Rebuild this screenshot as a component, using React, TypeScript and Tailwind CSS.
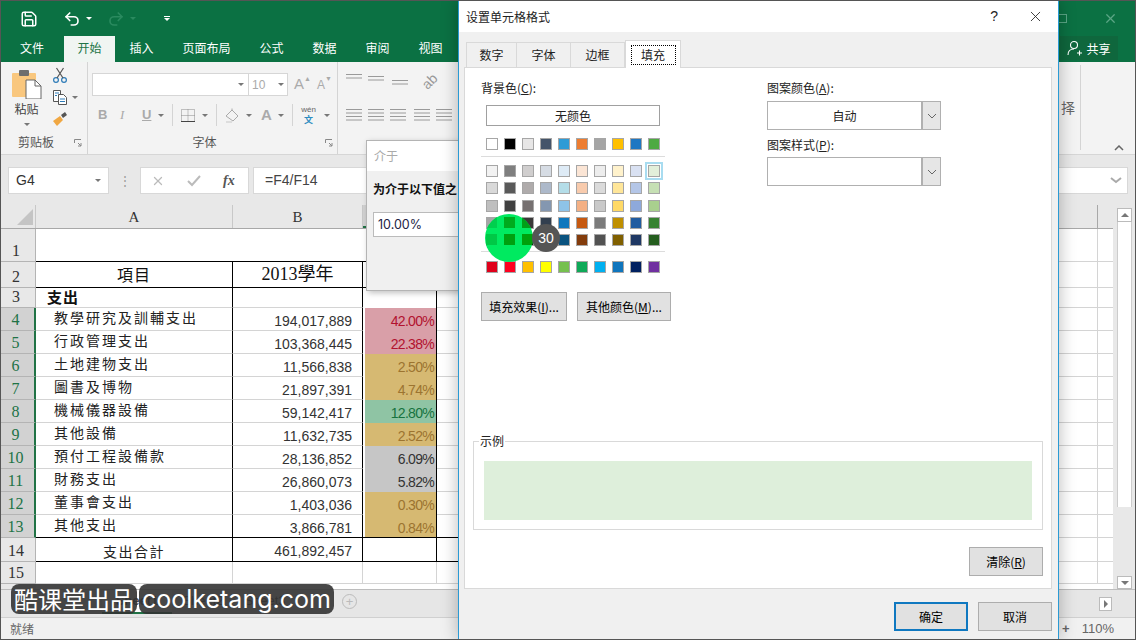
import { Redo2, Save, Undo2, X } from 'lucide-react';

const cjk = "font-['Noto_Sans_CJK_SC','Noto_Sans',sans-serif]";

const themeColors = ['bg-white', 'bg-black', 'bg-[#e7e6e6]', 'bg-[#44546a]', 'bg-[#2e9bd6]', 'bg-[#ed7d31]', 'bg-[#a5a5a5]', 'bg-[#ffc000]', 'bg-[#1f77c2]', 'bg-[#4eaa42]'];
const tintRows = [
  ['bg-[#f2f2f2]', 'bg-[#7f7f7f]', 'bg-[#d0cece]', 'bg-[#d6dce4]', 'bg-[#deebf6]', 'bg-[#fbe5d5]', 'bg-[#ededed]', 'bg-[#fff2cc]', 'bg-[#d9e1f2]', 'bg-[#e2efda]'],
  ['bg-[#d9d9d9]', 'bg-[#595959]', 'bg-[#afabab]', 'bg-[#adb9ca]', 'bg-[#b4dde8]', 'bg-[#f8cbad]', 'bg-[#dbdbdb]', 'bg-[#ffe699]', 'bg-[#b4c6e7]', 'bg-[#c6e0b4]'],
  ['bg-[#bfbfbf]', 'bg-[#404040]', 'bg-[#767171]', 'bg-[#8497b0]', 'bg-[#8ec3e8]', 'bg-[#f4b084]', 'bg-[#c9c9c9]', 'bg-[#ffd966]', 'bg-[#8ea9db]', 'bg-[#a9d08e]'],
  ['bg-[#a6a6a6]', 'bg-[#262626]', 'bg-[#3a3838]', 'bg-[#323f4f]', 'bg-[#0e77bd]', 'bg-[#c65911]', 'bg-[#7b7b7b]', 'bg-[#bf8f00]', 'bg-[#215ca0]', 'bg-[#378232]'],
  ['bg-[#808080]', 'bg-[#0d0d0d]', 'bg-[#171616]', 'bg-[#222b35]', 'bg-[#0a5380]', 'bg-[#833c0c]', 'bg-[#525252]', 'bg-[#806000]', 'bg-[#1f3864]', 'bg-[#255e1f]'],
];
const standardColors = ['bg-[#e0001b]', 'bg-[#ff0020]', 'bg-[#ffc000]', 'bg-[#ffff00]', 'bg-[#76c04f]', 'bg-[#0fa958]', 'bg-[#00b0f0]', 'bg-[#0f75bd]', 'bg-[#002060]', 'bg-[#7030a0]'];

const red = 'bg-[#d99fa8] text-[#b2122f]';
const tan = 'bg-[#d6b972] text-[#9c7430]';
const green = 'bg-[#8fc4a4] text-[#16733f]';
const grey = 'bg-[#c6c6c6] text-[#333]';

const dataRows = [
  { n: 4, a: '教學研究及訓輔支出', b: '194,017,889', c: '42.00%', fill: red },
  { n: 5, a: '行政管理支出', b: '103,368,445', c: '22.38%', fill: red },
  { n: 6, a: '土地建物支出', b: '11,566,838', c: '2.50%', fill: tan },
  { n: 7, a: '圖書及博物', b: '21,897,391', c: '4.74%', fill: tan },
  { n: 8, a: '機械儀器設備', b: '59,142,417', c: '12.80%', fill: green },
  { n: 9, a: '其他設備', b: '11,632,735', c: '2.52%', fill: tan },
  { n: 10, a: '預付工程設備款', b: '28,136,852', c: '6.09%', fill: grey },
  { n: 11, a: '財務支出', b: '26,860,073', c: '5.82%', fill: grey },
  { n: 12, a: '董事會支出', b: '1,403,036', c: '0.30%', fill: tan },
  { n: 13, a: '其他支出', b: '3,866,781', c: '0.84%', fill: tan },
];

function Caret({ className = '' }: { className?: string }) {
  return <span className={`block w-0 h-0 border-x-[3px] border-x-transparent border-t-[3px] border-t-[#777] ${className}`} />;
}

function Lines({ rows, className = '' }: { rows: number[]; className?: string }) {
  // small text-align style glyph, each number is the left inset of a line
  return (
    <svg width="16" height="14" viewBox="0 0 16 14" className={className} stroke="#9a9a9a" fill="none">
      {rows.map((inset, i) => (
        <path key={i} d={`M${inset} ${1.5 + i * 3.5}H${16 - (inset > 8 ? 0 : inset)}`} />
      ))}
    </svg>
  );
}

function Launcher({ className = '' }: { className?: string }) {
  return (
    <svg width="8" height="8" viewBox="0 0 8 8" className={className} fill="none" stroke="#888">
      <path d="M.5 4V.5H7M4 4l3 3M7 4v3H4" />
    </svg>
  );
}

function RibbonClipboard() {
  return (
    <div className="w-[87px] h-full border-r border-[#d4d4d4] flex flex-col shrink-0">
      <div className="flex flex-1">
        <div className="w-[51px] flex flex-col items-center pt-[6px]">
          <svg width="30" height="31" viewBox="0 0 30 31">
            <rect x="0" y="5" width="24" height="24" rx="1" fill="#f9c77e" />
            <rect x="7" y="2" width="10" height="6" rx="1" fill="#6d6d6d" />
            <path d="M14 12h9l6 6v13H14z" fill="#fff" stroke="#666" />
            <path d="M23 12v6h6" fill="none" stroke="#666" />
          </svg>
          <span className={`${cjk} text-[12px] leading-[18px] text-[#444] mt-[1px]`}>粘贴</span>
          <Caret className="mt-[5px]" />
        </div>
        <div className="flex flex-col items-start gap-[6px] pt-[5px]">
          <svg width="16" height="16" viewBox="0 0 16 16" fill="none" stroke="#2e7cb8" strokeWidth="1.2">
            <circle cx="4" cy="13" r="2.4" />
            <circle cx="12" cy="13" r="2.4" />
            <path d="M5 11 11.5 1M11 11 4.500 1" stroke="#555" />
          </svg>
          <div className="flex items-center gap-[4px]">
            <svg width="16" height="16" viewBox="0 0 16 16" fill="#fff" stroke="#555">
              <path d="M1.500 1.500h7v11h-7z" />
              <path d="M6.500 5.500h5l3 3v7h-8z" />
              <path d="M3 4h4M3 6.500h2M8 10h5M8 12.500h5" stroke="#2e7cb8" />
            </svg>
            <Caret />
          </div>
          <svg width="16" height="16" viewBox="0 0 16 16">
            <path d="M1 10 8 5l3 4-6 6z" fill="#f0a742" />
            <path d="M9 4l4-3 2 3-4 3z" fill="#555" />
          </svg>
        </div>
      </div>
      <div className="relative h-[20px] flex justify-center items-start">
        <span className={`${cjk} text-[12px] leading-[16px] text-[#555] pr-[16px]`}>剪贴板</span>
        <Launcher className="absolute right-[5px] top-[5px]" />
      </div>
    </div>
  );
}

function RibbonFont() {
  return (
    <div className="w-[250px] h-full border-r border-[#d4d4d4] shrink-0 flex flex-col">
      <div className="flex items-center pt-[11px] pl-[4px]">
        <div className="w-[157px] h-[23px] bg-white border border-[#d6d6d6] flex items-center justify-end pr-[4px]">
          <Caret />
        </div>
        <div className="w-[39px] h-[23px] bg-white border border-[#d6d6d6] border-l-0 flex items-center justify-between px-[3px]">
          <span className="font-['Liberation_Sans',sans-serif] text-[12px] text-[#aaa]">10</span>
          <Caret />
        </div>
        <span className="font-['Liberation_Sans',sans-serif] text-[15px] text-[#aaa] ml-[6px]">A</span>
        <span className="text-[7px] text-[#aaa] -mt-[10px]">▲</span>
        <span className="font-['Liberation_Sans',sans-serif] text-[12px] text-[#aaa] ml-[6px]">A</span>
        <span className="text-[7px] text-[#aaa] -mt-[10px]">▼</span>
      </div>
      <div className="flex items-center h-[22px] mt-[8px] pl-[10px] font-['Liberation_Sans',sans-serif] text-[#aaa] text-[13px]">
        <span className="w-[22px] font-bold">B</span>
        <span className="w-[22px] italic font-['Liberation_Serif',serif]">I</span>
        <span className="w-[16px] underline font-bold">U</span>
        <Caret />
        <span className="w-px h-[22px] bg-[#d4d4d4] ml-[8px] mr-[8px]" />
        <svg width="14" height="13" viewBox="0 0 14 13" fill="none" stroke="#8a8a8a" strokeDasharray="1 1">
          <path d="M.5.5h13v12H.5zM.5 6.500h13M7 .5v12" />
          <path d="M0 12.500h14" stroke="#444" strokeDasharray="none" />
        </svg>
        <Caret className="ml-[7px]" />
        <span className="w-px h-[22px] bg-[#d4d4d4] ml-[8px] mr-[8px]" />
        <svg width="16" height="15" viewBox="0 0 16 15" fill="none" stroke="#aaa">
          <path d="M1 8 7 2l6 6-5 5z" />
          <path d="M7 2V.5" />
          <path d="M1 14h6" stroke="#ddd" strokeWidth="2" />
        </svg>
        <Caret className="ml-[5px]" />
        <span className="text-[15px] font-bold ml-[9px] w-[14px]">A</span>
        <Caret className="ml-[3px]" />
        <span className="w-px h-[22px] bg-[#d4d4d4] ml-[8px] mr-[7px]" />
        <div className="flex flex-col items-center leading-[10px] w-[17px]">
          <span className="text-[8px] text-[#666]">wén</span>
          <span className={`${cjk} text-[9px] text-[#2e8cc0] font-bold`}>文</span>
        </div>
        <Caret className="ml-[7px]" />
      </div>
      <div className="relative mt-auto h-[20px] flex justify-center">
        <span className={`${cjk} text-[12px] leading-[16px] text-[#555] -ml-[16px]`}>字体</span>
        <Launcher className="absolute right-[4px] top-[5px]" />
      </div>
    </div>
  );
}

function RibbonAlign() {
  return (
    <div className="flex-1 flex flex-col pl-[8px] pt-[11px]">
      <div className="flex items-start gap-[6px]">
        <Lines rows={[0, 0]} />
        <Lines rows={[0, 0]} className="mt-[2px]" />
        <Lines rows={[0, 0]} className="mt-[6px] ml-[2px]" />
        <span className="ml-[8px] -mt-[2px] text-[14px] text-[#999] -rotate-45 font-['Liberation_Sans',sans-serif]">ab</span>
      </div>
      <div className="flex items-center gap-[6px] mt-[15px]">
        <Lines rows={[0, 0, 0, 0]} />
        <Lines rows={[0, 0, 0, 0]} />
        <Lines rows={[0, 0, 0, 0]} />
        <Lines rows={[0, 0, 0, 0]} className="ml-[2px]" />
        <Lines rows={[0, 0, 0, 0]} />
      </div>
    </div>
  );
}

function ExcelTop() {
  return (
    <>
      <div className="h-[35px] bg-[#0b7143] flex items-center pl-[19px] shrink-0">
        <Save size={18} color="#fff" strokeWidth={2} />
        <Undo2 size={18} color="#fff" strokeWidth={2.2} className="ml-[25px]" />
        <span className="ml-[5px] w-0 h-0 border-x-[3px] border-x-transparent border-t-[3px] border-t-white" />
        <Redo2 size={18} color="#2a8a5f" strokeWidth={2.2} className="ml-[15px]" />
        <span className="ml-[5px] w-0 h-0 border-x-[3px] border-x-transparent border-t-[3px] border-t-[#2a8a5f]" />
        <div className="ml-[28px] flex flex-col items-center gap-[1px]">
          <span className="w-[6px] h-px bg-white" />
          <span className="w-0 h-0 border-x-[3px] border-x-transparent border-t-[3px] border-t-white" />
        </div>
        <div className="ml-auto flex items-center pr-[17px]">
          <span className="w-[9px] h-[9px] border border-[#5aa585] mr-[36px]" />
          <X size={15} color="#5aa585" />
        </div>
      </div>
      <div className={`${cjk} h-[26px] bg-[#0b7143] flex items-stretch text-[12px] leading-[23px] text-white shrink-0`}>
        <span className="pl-[19px] pr-[20px]">文件</span>
        <span className="px-[13.5px] bg-[#f0f5f2] text-[#217346]">开始</span>
        <span className="px-[14.500px]">插入</span>
        <span className="px-[14.500px]">页面布局</span>
        <span className="px-[14.500px]">公式</span>
        <span className="px-[14.500px]">数据</span>
        <span className="px-[14.500px]">审阅</span>
        <span className="px-[14.500px]">视图</span>
        <div className="ml-auto mr-[17px] w-[58px] h-[24px] bg-[#0f673d] flex items-center justify-center gap-[3px]">
          <svg width="16" height="16" viewBox="0 0 16 16" fill="none" stroke="#fff" strokeWidth="1.1">
            <circle cx="7" cy="5" r="3.500" />
            <path d="M1 15c0-4 2.500-6 6-6M10 13h5M12.500 10.500v5" />
          </svg>
          <span>共享</span>
        </div>
      </div>
      <div className="h-[93px] bg-[#f3f3f3] border-b border-[#d6d6d6] flex relative shrink-0">
        <RibbonClipboard />
        <RibbonFont />
        <RibbonAlign />
        <div className="w-[22px] h-[85px] mt-[3px] mr-[54px] border-r border-[#d4d4d4] flex items-center">
          <span className={`${cjk} text-[14px] text-[#666] ml-[2px]`}>择</span>
        </div>
        <svg width="10" height="6" viewBox="0 0 10 6" className="absolute right-[11px] bottom-[3px]" fill="none" stroke="#666" strokeWidth="1.500">
          <path d="M1 5l4-4 4 4" />
        </svg>
      </div>
      <div className="h-[50px] bg-[#e8e8e8] flex items-start pt-[12px] pl-[7px] pr-[7px] shrink-0">
        <div className="w-[101px] h-[27px] bg-white border border-[#d8d8d8] flex items-center justify-between pl-[7px] pr-[7px] font-['Liberation_Sans',sans-serif] text-[14px] text-[#333]">
          G4
          <Caret />
        </div>
        <span className="w-[31px] text-center text-[#999] text-[12px] leading-[27px]">⋮</span>
        <div className="w-[109px] h-[27px] bg-white border border-[#d8d8d8] flex items-center pl-[10px] gap-[22px] text-[#bbb]">
          <X size={14} color="#bbb" strokeWidth={2.2} />
          <svg width="14" height="12" viewBox="0 0 14 12" fill="none" stroke="#bbb" strokeWidth="2">
            <path d="M1 6l4 4 8-9" />
          </svg>
          <span className="font-['Liberation_Serif',serif] italic text-[14px] font-bold text-[#555]">fx</span>
        </div>
        <div className="flex-1 ml-[4px] h-[27px] bg-white border border-[#d8d8d8] flex items-center pl-[11px] pr-[5px] font-['Liberation_Sans',sans-serif] text-[14px] text-[#444]">
          =F4/F14
          <svg width="12" height="7" viewBox="0 0 12 7" fill="none" stroke="#aaa" strokeWidth="2" className="ml-auto">
            <path d="M1 1l5 4 5-4" />
          </svg>
        </div>
      </div>
    </>
  );
}

function RowNum({ n, active = false }: { n: number; active?: boolean }) {
  return (
    <div
      className={`w-[35px] shrink-0 flex items-end justify-center font-['Liberation_Serif',serif] text-[16px] leading-[20px] pr-[4px] border-b border-[#b4b4b4] ${
        active ? 'bg-[#d2d2d2] text-[#217346] border-r-2 border-r-[#217346]' : 'bg-[#e8e8e8] text-[#333] border-r border-r-[#b4b4b4]'
      }`}
    >
      {n}
    </div>
  );
}

// column D runs under the dialogs; the table's black rules stop beneath them
function RestCells({ black = false }: { black?: boolean }) {
  return (
    <>
      <div className={`w-[120px] shrink-0 border-b ${black ? 'border-black' : 'border-[#d4d4d4]'}`} />
      <div className="flex-1 border-b border-r border-[#d4d4d4]" />
      <div className="w-[15px] shrink-0 border-b border-[#d4d4d4]" />
    </>
  );
}

function Sheet() {
  const number = "font-['Liberation_Sans',sans-serif] text-[14px] text-[#333]";
  const cellA = `${cjk} w-[197px] shrink-0 text-[14px] text-[#222] tracking-[2px]`;
  return (
    <div className="flex h-[384px] bg-[#e8e8e8] shrink-0">
      <div className="w-[1112px] shrink-0 flex flex-col bg-white">
        <div className="h-[24px] flex bg-[#e8e8e8] border-b border-[#a8a8a8] font-['Liberation_Serif',serif] text-[15px] text-[#333] shrink-0">
          <div className="w-[35px] flex items-end justify-end pr-[2px] pb-[3px] border-r border-[#c8c8c8]">
            <span className="w-0 h-0 border-l-[16px] border-l-transparent border-b-[16px] border-b-[#c4c4c4]" />
          </div>
          <div className="w-[197px] text-center leading-[24px] border-r border-[#c8c8c8]">A</div>
          <div className="w-[130px] text-center leading-[24px] border-r border-[#c8c8c8]">B</div>
          <div className="w-[74px] bg-[#d2d2d2] border-b-2 border-[#217346]" />
          <div className="flex-1 border-r border-[#a8a8a8]" />
          <div className="w-[15px]" />
        </div>

        <div className="h-[33px] flex shrink-0">
          <RowNum n={1} />
          <div className="w-[401px] shrink-0 border-b border-black" />
          <RestCells black />
        </div>

        <div className="h-[26px] flex shrink-0">
          <RowNum n={2} />
          <div className={`${cjk} w-[197px] text-center text-[16px] tracking-[1px] leading-[24px] text-[#111] border-b border-r border-black`}>項目</div>
          <div className="w-[130px] text-center font-['Liberation_Serif','Noto_Sans_CJK_TC',serif] text-[18px] leading-[24px] text-[#111] border-b border-r border-black">2013學年</div>
          <div className="w-[74px] border-b border-r border-black" />
          <RestCells black />
        </div>

        <div className="h-[20px] flex shrink-0">
          <RowNum n={3} />
          <div className={`${cjk} w-[197px] pl-[11px] font-bold text-[15px] leading-[18px] tracking-[1px] text-[#111] border-b border-r border-[#d4d4d4] border-r-black`}>支出</div>
          <div className="w-[130px] border-b border-r border-[#d4d4d4] border-r-black" />
          <div className="w-[74px] border-r border-black" />
          <RestCells />
        </div>

        {dataRows.map((row) => (
          <div key={row.n} className="h-[23px] flex shrink-0">
            <RowNum n={row.n} active />
            <div className={`${cellA} pl-[18px] leading-[19px] border-b border-r border-[#d4d4d4] border-r-black ${row.n === 13 ? 'border-b-black' : ''}`}>{row.a}</div>
            <div className={`${number} w-[130px] shrink-0 text-right pr-[10px] leading-[27px] border-b border-r border-[#d4d4d4] border-r-black ${row.n === 13 ? 'border-b-black' : ''}`}>{row.b}</div>
            <div className={`w-[74px] shrink-0 border-r border-black pl-[2px] ${row.n === 13 ? 'border-b border-b-black' : ''}`}>
              <div className={`h-full font-['Liberation_Sans',sans-serif] text-[14px] tracking-[-0.7px] text-right leading-[26px] pr-[2px] ${row.fill}`}>{row.c}</div>
            </div>
            <RestCells black={row.n === 13} />
          </div>
        ))}

        <div className="h-[24px] flex shrink-0">
          <RowNum n={14} />
          <div className={`${cjk} w-[197px] text-center text-[14px] tracking-[1.500px] leading-[26px] text-[#222] border-b border-r border-black`}>支出合計</div>
          <div className={`${number} w-[130px] text-right pr-[10px] leading-[27px] border-b border-r border-black`}>461,892,457</div>
          <div className="w-[74px] border-b border-r border-black" />
          <RestCells black />
        </div>

        <div className="h-[22px] flex shrink-0">
          <RowNum n={15} />
          <div className="w-[197px] border-b border-r border-[#d4d4d4]" />
          <div className="w-[130px] border-b border-r border-[#d4d4d4]" />
          <div className="w-[74px] border-b border-r border-[#d4d4d4]" />
          <RestCells />
        </div>
        <div className="flex-1 flex">
          <div className="w-[35px] bg-[#e8e8e8]" />
        </div>
      </div>

      <div className="w-[15px] ml-[4px] flex flex-col pt-[3px]">
        <div className="h-[14px] bg-white border border-[#bbb] flex items-center justify-center">
          <span className="w-0 h-0 border-x-[4px] border-x-transparent border-b-[4px] border-b-[#777]" />
        </div>
        <div className="h-[285px] bg-white border-x border-[#ccc]" />
        <div className="flex-1" />
        <div className="h-[13px] bg-white border border-[#bbb] flex items-center justify-center">
          <span className="w-0 h-0 border-x-[4px] border-x-transparent border-t-[4px] border-t-[#777]" />
        </div>
      </div>
    </div>
  );
}

function ExcelBottom() {
  return (
    <>
      <div className="h-[28px] bg-[#e6e6e6] border-t border-[#bdbdbd] flex items-start pl-[101px] shrink-0 font-['Liberation_Sans',sans-serif] text-[13px] text-[#444]">
        <span className="w-[70px] h-[24px] bg-white border-b-2 border-[#217346] text-center leading-[22px] font-bold">Sheet1</span>
        <span className="w-[62px] text-center leading-[22px]">Sheet2</span>
        <span className="w-[62px] text-center leading-[22px]">Sheet3</span>
        <span className="ml-[46px] mt-[4px] w-[15px] h-[15px] rounded-full border border-[#bbb] text-center text-[#bbb] leading-[13px]">+</span>
        <div className="ml-auto mr-[23px] mt-[7px] w-[13px] h-[14px] bg-white border border-[#bbb] flex items-center justify-center">
          <span className="w-0 h-0 border-y-[4px] border-y-transparent border-l-[4px] border-l-[#777]" />
        </div>
      </div>
      <div className="h-[22px] bg-[#f1f1f1] border-t border-[#d0d0d0] flex items-center pl-[9px] pr-[21px] shrink-0">
        <span className={`${cjk} text-[12px] text-[#666]`}>就绪</span>
        <span className="ml-auto font-['Liberation_Sans',sans-serif] text-[13px] font-bold text-[#666]">+</span>
        <span className="ml-[12px] font-['Liberation_Sans',sans-serif] text-[13px] text-[#666]">110%</span>
      </div>
    </>
  );
}

function Swatch({ color, selected = false }: { color: string; selected?: boolean }) {
  return (
    <span className={`w-[12px] h-[12px] border border-[#a6a6a6] shrink-0 ${color} ${selected ? 'outline-2 outline-offset-1 outline-[#a8dcf0]' : ''}`} />
  );
}

function SwatchRow({ colors, selectedIndex = -1 }: { colors: string[]; selectedIndex?: number }) {
  return (
    <div className="flex gap-[6px] h-[12px]">
      {colors.map((c, i) => (
        <Swatch key={i} color={c} selected={i === selectedIndex} />
      ))}
    </div>
  );
}

function Combo({ value }: { value: string }) {
  return (
    <div className="w-[174px] h-[29px] bg-white border border-[#b0b0b0] flex items-stretch">
      <span className="flex-1 text-center leading-[27px]">{value}</span>
      <span className="w-[19px] bg-[#e6e6e6] border-x-2 border-[#b0b0b0] border-r-0 flex items-center justify-center">
        <svg width="10" height="6" viewBox="0 0 10 6" fill="none" stroke="#666">
          <path d="M1 1l4 4 4-4" />
        </svg>
      </span>
    </div>
  );
}

function DialogButton({ children, primary = false, className = '' }: { children: React.ReactNode; primary?: boolean; className?: string }) {
  return (
    <button className={`h-[29px] bg-[#e1e1e1] text-black text-[12px] ${primary ? 'border-2 border-[#0f78c0]' : 'border border-[#adadad]'} ${className}`}>
      {children}
    </button>
  );
}

function FormatDialog() {
  return (
    <div className={`${cjk} absolute left-[457px] -top-px w-[601px] h-[640px] bg-[#f0f0f0] border-x border-t border-[#2a9ad4] shadow-[0_0_16px_rgba(0,0,0,0.28)] flex flex-col text-[12px] text-[#222]`}>
      <div className="h-[31px] bg-white flex items-center pl-[7px] shrink-0">
        <span>设置单元格格式</span>
        <span className="ml-auto font-['Liberation_Sans',sans-serif] text-[14px]">?</span>
        <X size={17} strokeWidth={1.2} className="ml-[29px] mr-[14px]" color="#222" />
      </div>

      <div className="h-[35px] flex items-end pl-[7px] shrink-0">
        <span className="w-[51px] h-[25px] bg-[#f0f0f0] border border-b-0 border-[#d9d9d9] text-center leading-[24px]">数字</span>
        <span className="w-[54px] h-[25px] bg-[#f0f0f0] border border-b-0 border-l-0 border-[#d9d9d9] text-center leading-[24px]">字体</span>
        <span className="w-[54px] h-[25px] bg-[#f0f0f0] border border-b-0 border-l-0 border-[#d9d9d9] text-center leading-[24px]">边框</span>
        <span className="relative z-10 w-[56px] h-[28px] -mb-px bg-white border border-b-0 border-[#d9d9d9] flex items-center justify-center">
          <span className="w-[45px] h-[20px] border border-dotted border-black text-center leading-[18px]">填充</span>
        </span>
      </div>

      <div className="ml-[5px] mr-[6px] h-[522px] bg-white border border-[#d9d9d9] flex flex-col shrink-0">
        <div className="flex pl-[16px] pt-[11px]">
          <div className="w-[286px] shrink-0 flex flex-col">
            <span className="leading-[18px]">背景色(<span className="underline">C</span>):</span>
            <div className="relative ml-[5px] mt-[8px]">
              <div className="w-[174px] h-[21px] border border-[#a0a0a0] text-center leading-[19px]">无颜色</div>
              <div className="mt-[12px]">
                <SwatchRow colors={themeColors} />
              </div>
              <div className="w-[184px] -ml-[5px] h-px bg-[#dcdcdc] mt-[6px] mb-[8px]" />
              <div className="flex flex-col gap-[5.300px]">
                <SwatchRow colors={tintRows[0]} selectedIndex={9} />
                {tintRows.slice(1).map((r, i) => (
                  <SwatchRow key={i} colors={r} />
                ))}
              </div>
              <div className="w-[184px] -ml-[5px] h-px bg-[#dcdcdc] mt-[5px] mb-[9px]" />
              <SwatchRow colors={standardColors} />

              {/* click highlight from the screen recording */}
              <svg width="48" height="48" viewBox="0 0 48 48" className="absolute left-[-1px] top-[109px]">
                <defs>
                  <clipPath id="spot">
                    <circle cx="24" cy="24" r="24" />
                  </clipPath>
                </defs>
                <circle cx="24" cy="24" r="24" fill="#00ea60" />
                <g clipPath="url(#spot)">
                  <rect x="1" y="3" width="11" height="11" fill="#00cf4e" />
                  <rect x="19" y="3" width="11" height="11" fill="#00ab1e" />
                  <rect x="37" y="3" width="11" height="11" fill="#00a018" />
                  <rect x="1" y="20" width="11" height="11" fill="#00c846" />
                  <rect x="19" y="20" width="11" height="11" fill="#00a010" />
                  <rect x="37" y="20" width="11" height="11" fill="#00a00c" />
                </g>
              </svg>
              <span className="absolute left-[46px] top-[119px] w-[28px] h-[28px] rounded-full bg-[#555] text-white text-center leading-[28px] font-['Liberation_Sans',sans-serif] text-[14px]">30</span>
            </div>
            <div className="flex gap-[10px] mt-[19px]">
              <DialogButton className="w-[86px]">填充效果(<span className="underline">I</span>)...</DialogButton>
              <DialogButton className="w-[94px]">其他颜色(<span className="underline">M</span>)...</DialogButton>
            </div>
          </div>
          <div className="flex flex-col">
            <span className="leading-[18px]">图案颜色(<span className="underline">A</span>):</span>
            <div className="mt-[4px]">
              <Combo value="自动" />
            </div>
            <span className="mt-[6px] leading-[18px]">图案样式(<span className="underline">P</span>):</span>
            <div className="mt-[3px]">
              <Combo value="" />
            </div>
          </div>
        </div>

        <div className="relative mx-[8px] mt-[120px] h-[89px] border border-[#d9d9d9] px-[10px] pt-[19px]">
          <span className="absolute left-[5px] -top-[9px] bg-white px-[1px] leading-[16px]">示例</span>
          <div className="h-[59px] bg-[#deefdb]" />
        </div>
        <div className="flex justify-end mt-[17px] mr-[8px]">
          <DialogButton className="w-[74px]">清除(<span className="underline">R</span>)</DialogButton>
        </div>
      </div>

      <div className="flex justify-end gap-[10px] pr-[6px] mt-[13px]">
        <DialogButton primary className="w-[74px]">确定</DialogButton>
        <DialogButton className="w-[74px]">取消</DialogButton>
      </div>
    </div>
  );
}

function BetweenDialog() {
  return (
    <div className={`${cjk} absolute left-[365px] top-[139px] w-[95px] h-[151px] bg-[#f0f0f0] border border-[#b4b4b4] shadow-[2px_2px_6px_rgba(0,0,0,0.25)] flex flex-col overflow-hidden`}>
      <div className="h-[30px] bg-white pl-[7px] text-[12px] leading-[29px] text-[#aaa] shrink-0">介于</div>
      <div className="pl-[6px] mt-[9px] text-[12px] leading-[18px] font-bold text-[#111] whitespace-nowrap">为介于以下值之</div>
      <div className="ml-[6px] mt-[14px] h-[25px] bg-white border border-[#bbb] pl-[4px] leading-[24px] font-['Inter','Noto_Sans',sans-serif] text-[12.5px] text-[#224]">10.00%</div>
    </div>
  );
}

function Watermark() {
  return (
    <div className="absolute left-[10px] top-[583px] flex items-center gap-[2px] text-white text-[24px] leading-[30px]">
      <span className={`${cjk} bg-[#333]/90 rounded-[8px] px-[3px]`}>酷课堂出品</span>
      <span className="font-['Inter','Noto_Sans',sans-serif] text-[25px] bg-[#333]/90 rounded-[8px] px-[3px]">coolketang.com</span>
    </div>
  );
}

export default function App() {
  return (
    <div className="relative w-[1136px] h-[640px] overflow-hidden bg-[#333] border border-[#555] flex flex-col">
      <ExcelTop />
      <Sheet />
      <ExcelBottom />
      <BetweenDialog />
      <FormatDialog />
      <Watermark />
    </div>
  );
}
